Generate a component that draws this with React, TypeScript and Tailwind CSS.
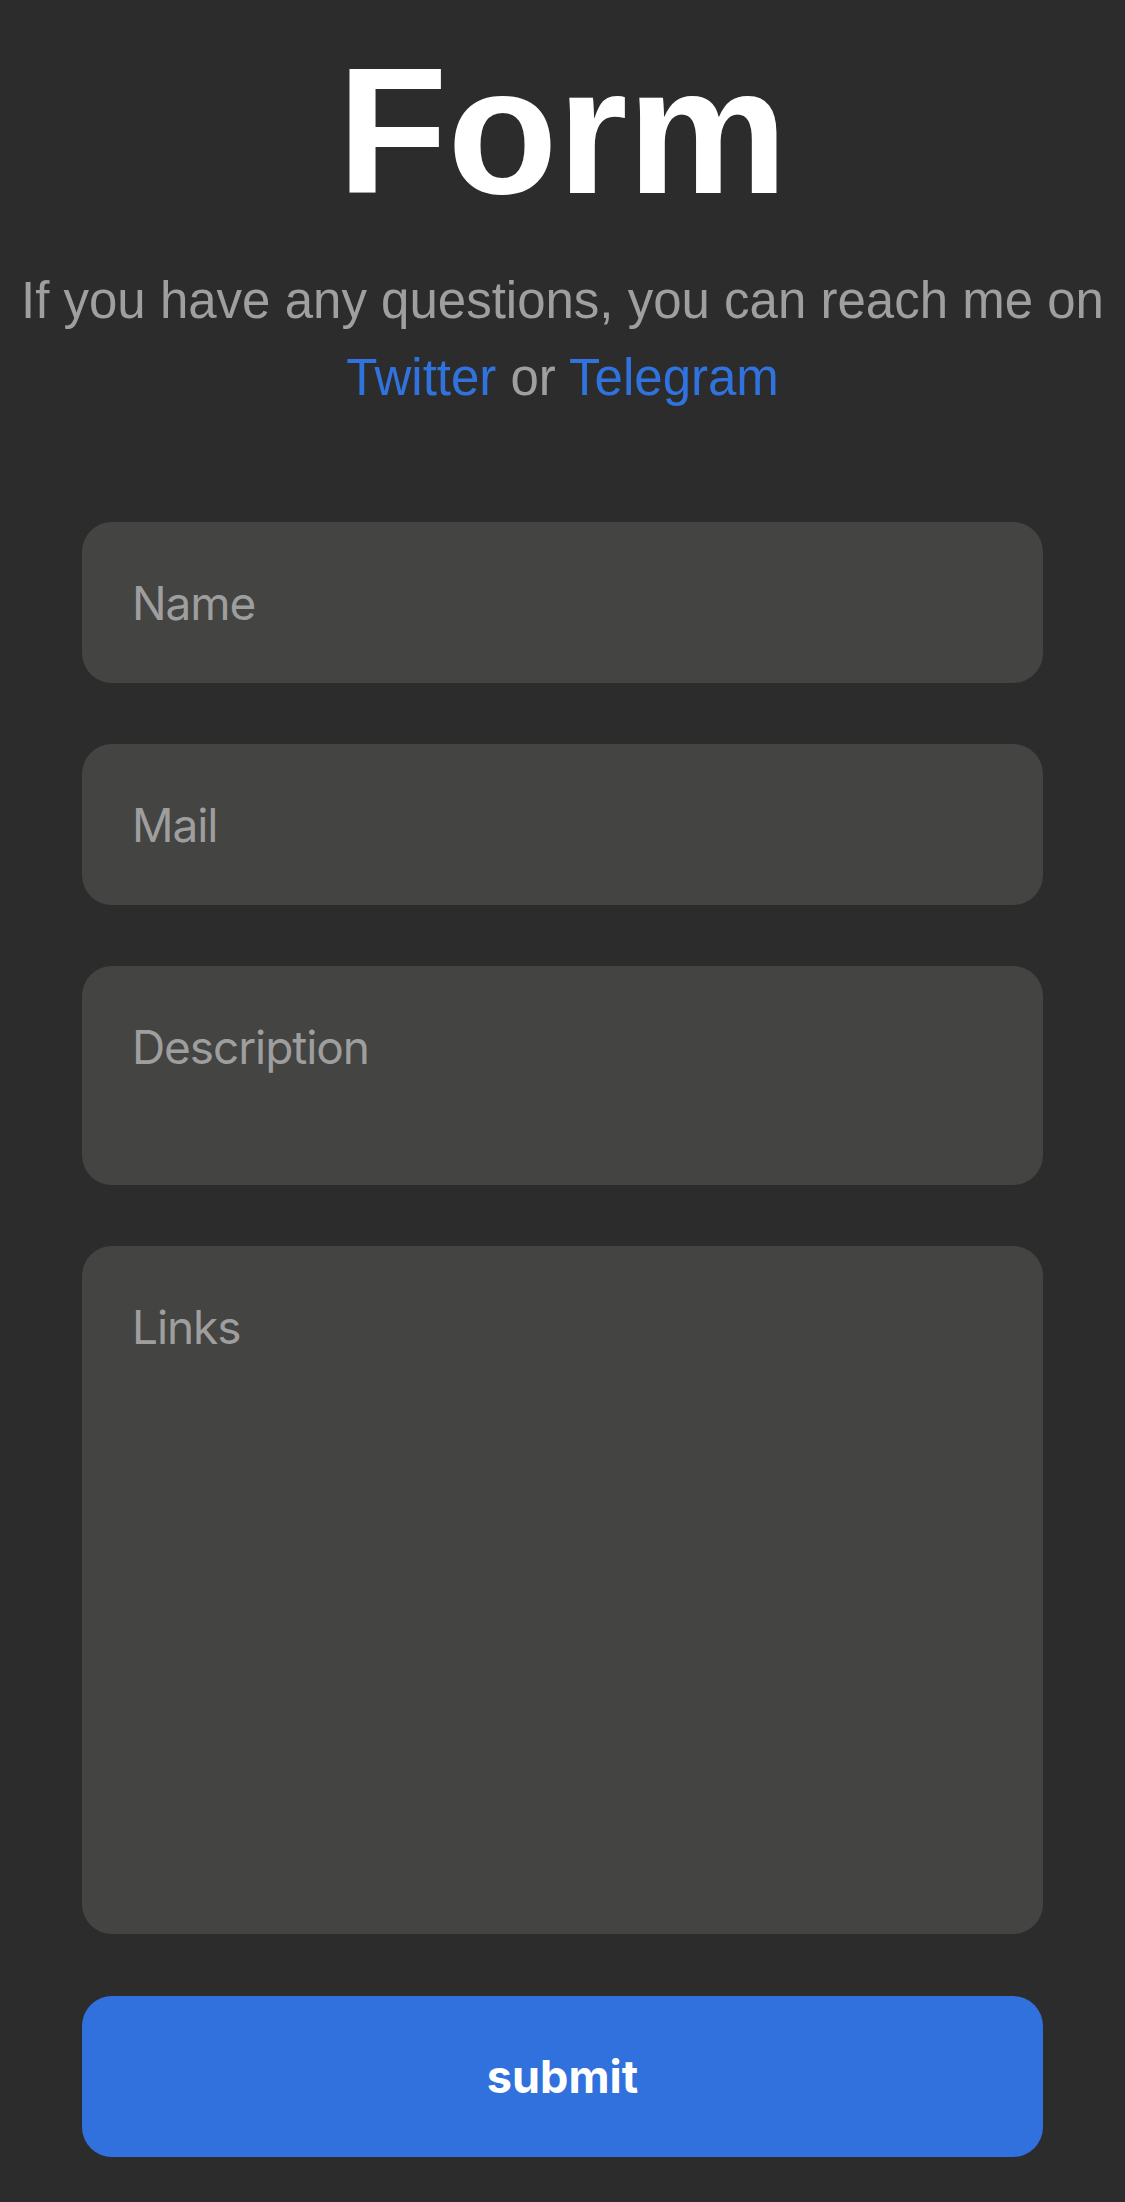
import { useState } from "react";

export default function App() {
  const [name, setName] = useState("");
  const [mail, setMail] = useState("");
  const [description, setDescription] = useState("");
  const [links, setLinks] = useState("");

  const field =
    "block w-full rounded-[30px] bg-[#444443] pl-[50px] pr-[50px] text-[46px] leading-[56px] tracking-[-1.1px] text-white placeholder:text-[#9e9e9e] outline-none font-['Inter',sans-serif]";

  return (
    <div className="min-h-screen w-full bg-[#2c2c2c] pb-[45px]">
      <h1 className="pt-[41px] text-center text-[180px] leading-[180px] font-bold text-white font-['Liberation_Sans',Arial,sans-serif]">
        Form
      </h1>
      <p className="mt-[41px] px-2 text-center text-[51px] leading-[77px] text-[#9f9f9f] font-['Liberation_Sans',Arial,sans-serif]">
        If you have any questions, you can reach me on{" "}
        <a href="#" className="text-[#3173de]">Twitter</a> or{" "}
        <a href="#" className="text-[#3173de]">Telegram</a>
      </p>

      <form
        className="mt-[106px] flex flex-col gap-[61px] px-[82px]"
        onSubmit={(e) => {
          e.preventDefault();
        }}
      >
        <input
          type="text"
          placeholder="Name"
          value={name}
          onChange={(e) => setName(e.target.value)}
          className={field + " h-[161px]"}
        />
        <input
          type="email"
          placeholder="Mail"
          value={mail}
          onChange={(e) => setMail(e.target.value)}
          className={field + " h-[161px]"}
        />
        <textarea
          placeholder="Description"
          value={description}
          onChange={(e) => setDescription(e.target.value)}
          className={field + " h-[219px] resize-none pt-[53px]"}
        />
        <textarea
          placeholder="Links"
          value={links}
          onChange={(e) => setLinks(e.target.value)}
          className={field + " h-[688px] resize-none pt-[53px]"}
        />
        <button
          type="submit"
          className="mt-px h-[161px] w-full rounded-[30px] bg-[#3171de] text-[45px] font-bold text-white font-['Inter',sans-serif]"
        >
          submit
        </button>
      </form>
    </div>
  );
}
